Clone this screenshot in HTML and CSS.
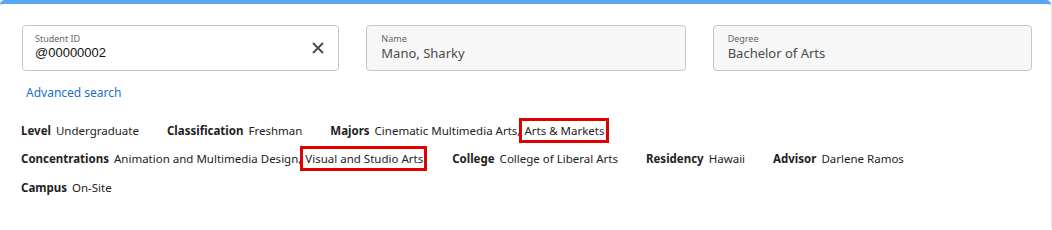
FILE: index.html
```html
<!DOCTYPE html>
<html>
<head>
<meta charset="utf-8">
<link rel="stylesheet" href="styles.css">
</head>
<body>
<div class="card">
  <div class="fields">
    <div class="field">
      <div class="field-text">
        <div class="field-label">Student ID</div>
        <div class="field-value id-value">@00000002</div>
      </div>
      <svg class="clear" width="14" height="14" viewBox="0 0 14 14"><path d="M2 2 L12 12 M12 2 L2 12" stroke="#4a4a4a" stroke-width="1.8" fill="none"/></svg>
    </div>
    <div class="field disabled">
      <div class="field-text">
        <div class="field-label">Name</div>
        <div class="field-value">Mano, Sharky</div>
      </div>
    </div>
    <div class="field disabled">
      <div class="field-text">
        <div class="field-label">Degree</div>
        <div class="field-value">Bachelor of Arts</div>
      </div>
    </div>
  </div>
  <a class="adv" href="#">Advanced search</a>
  <div class="info">
    <div class="row">
      <span class="item"><b>Level</b> Undergraduate</span>
      <span class="item"><b>Classification</b> Freshman</span>
      <span class="item"><b>Majors</b> Cinematic Multimedia Arts,<span class="mark">Arts &amp; Markets</span></span>
    </div>
    <div class="row">
      <span class="item"><b>Concentrations</b> Animation and Multimedia Design,<span class="mark">Visual and Studio Arts</span></span>
      <span class="item"><b>College</b> College of Liberal Arts</span>
      <span class="item"><b>Residency</b> Hawaii</span>
      <span class="item"><b>Advisor</b> Darlene Ramos</span>
    </div>
    <div class="row">
      <span class="item"><b>Campus</b> On-Site</span>
    </div>
  </div>
</div>
</body>
</html>
```
FILE: styles.css
```css
html, body {
  margin: 0;
  padding: 0;
  background: #ffffff;
}
body {
  font-family: "Noto Sans", "Open Sans", sans-serif;
  color: #222;
}
.card {
  box-sizing: border-box;
  width: 1051px;
  height: 228px;
  border-top: 4px solid #58a6f3;
  border-radius: 5px 5px 0 0;
  box-shadow: 0 1px 2px rgba(0,0,0,0.35), 0 0 1px rgba(0,0,0,0.25);
  padding: 21px 19px 0 22px;
}
.fields {
  display: flex;
  gap: 27px;
}
.field {
  box-sizing: border-box;
  flex: 1;
  height: 46px;
  border: 1px solid #c6c6c6;
  border-radius: 4px;
  background: #fff;
  display: flex;
  align-items: center;
  padding: 0 12px 0 12px;
}
.field.disabled {
  background: #f7f7f7;
  padding-left: 14px;
}
.field-text {
  flex: 1;
  display: flex;
  flex-direction: column;
}
.field-label {
  font-size: 9px;
  line-height: 11px;
  color: #666;
  margin-top: -2px;
}
.field-value {
  font-size: 13px;
  line-height: 18px;
  color: #4a4a4a;
}
.id-value {
  font-family: "Liberation Sans", Arial, sans-serif;
  color: #111;
}
.clear {
  display: block;
  margin-right: 1px;
}
.adv {
  display: inline-block;
  margin: 13px 0 0 4px;
  font-size: 12px;
  line-height: 17px;
  color: #1a6fcf;
  text-decoration: none;
}
.info {
  margin-top: 20px;
  display: flex;
  flex-direction: column;
  gap: 11px;
}
.row {
  display: flex;
  gap: 28px;
  font-size: 11.5px;
  line-height: 17px;
  margin-left: -1px;
}
.row + .row + .row {
  margin-top: 1px;
}
.item b {
  font-weight: 700;
  color: #222;
  margin-right: 2px;
}
.item {
  color: #222;
}
.mark {
  outline: 3px solid #e00000;
  outline-offset: 0;
  padding: 2px 1px 2px 2px;
  margin-left: 2px;
}
```
